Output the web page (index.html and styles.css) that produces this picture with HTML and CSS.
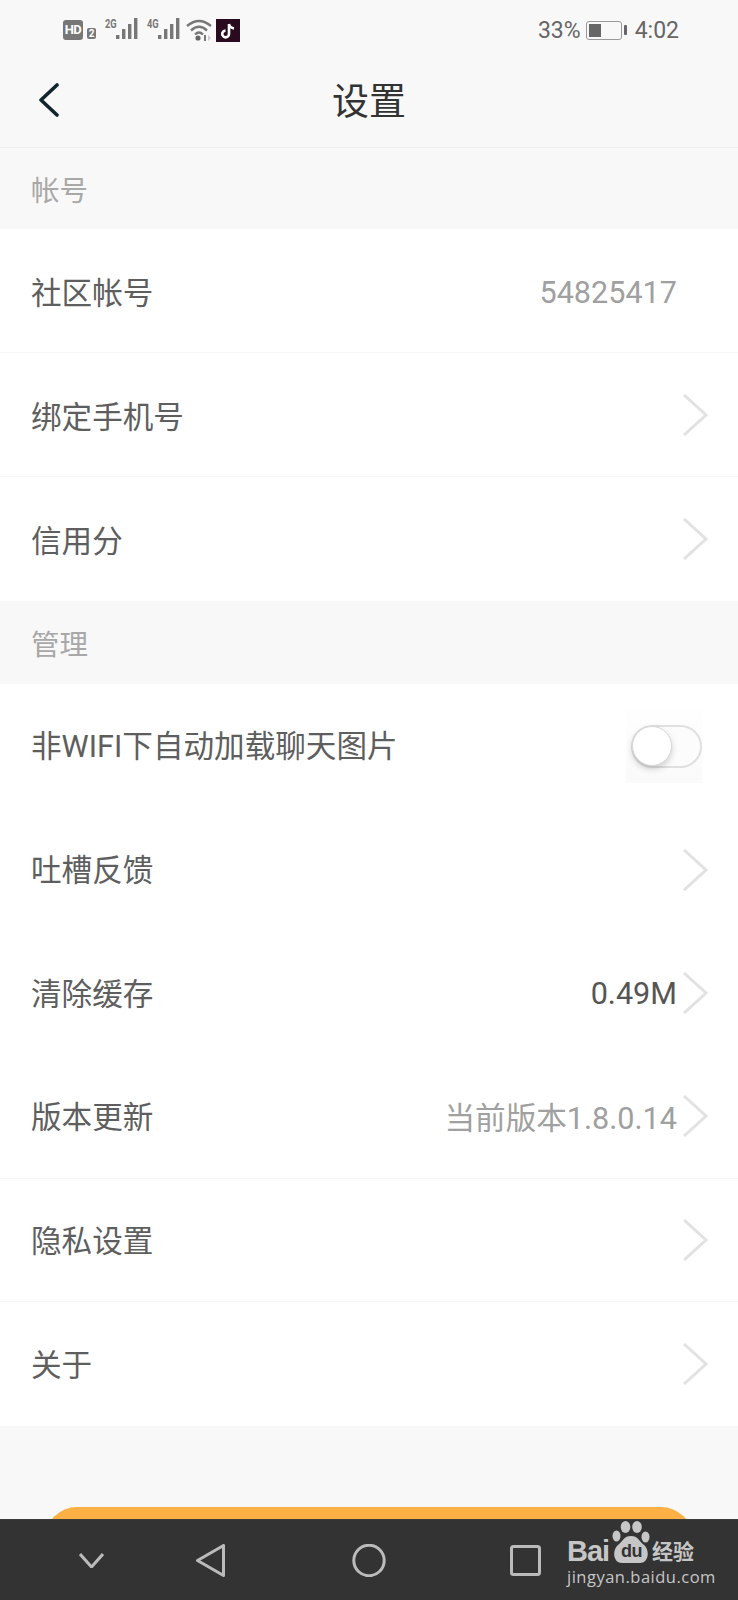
FILE: index.html
```html
<!DOCTYPE html>
<html lang="zh-CN">
<head>
  <meta charset="UTF-8" />
  <meta name="viewport" content="width=device-width, initial-scale=1.0" />
  <title>设置</title>
  <link rel="stylesheet" href="styles.css">
</head>
<body>
  <div class="content">
    <div class="status-bar">
      <div class="status-left">
        <span class="hd">HD</span>
        <span class="sim">2</span>
        <svg class="signal" width="35" height="28" viewBox="0 -2 35 28">
          <text class="net" transform="translate(1 10) scale(.85 1.2)">2G</text>
          <rect x="12" y="17" width="3.4" height="4"/><rect x="18" y="11" width="3.4" height="10"/>
          <rect x="24" y="6" width="3.4" height="15"/><rect x="30" y="0" width="3.4" height="21"/>
        </svg>
        <svg class="signal" width="35" height="28" viewBox="0 -2 35 28">
          <text class="net" transform="translate(1 10) scale(.85 1.2)">4G</text>
          <rect x="12" y="17" width="3.4" height="4"/><rect x="18" y="11" width="3.4" height="10"/>
          <rect x="24" y="6" width="3.4" height="15"/><rect x="30" y="0" width="3.4" height="21"/>
        </svg>
        <svg class="wifi" width="27" height="24" viewBox="0 0 27 24">
          <path d="M1 8 Q13 -2 25 8 M5 12.5 Q13 5 21 12.5 M9 16.5 Q13 12.5 17 16.5" fill="none" stroke="#777" stroke-width="2.4"/>
          <circle cx="12" cy="20" r="2.6" fill="#666"/>
          <rect x="18" y="17" width="2" height="6" fill="#777"/>
          <path d="M22 17 L25 20 L22 23Z" fill="#ccc"/>
        </svg>
        <svg class="tiktok" width="24" height="23" viewBox="0 0 24 23">
          <rect width="24" height="23" fill="#2a0a1e"/>
          <path d="M13 5 V15 A3.4 3.4 0 1 1 9.5 11.6 M13 5 Q14 9 18 9.4" fill="none" stroke="#fff" stroke-width="2.6"/>
        </svg>
      </div>
      <div class="status-right">
        <span>33%</span>
        <span class="battery"><span class="battery-level"></span></span>
        <span class="battery-nub"></span>
        <span class="clock">4:02</span>
      </div>
    </div>

    <div class="title-bar">
      <svg class="back" width="22" height="34" viewBox="0 0 22 34">
        <path d="M19 2 L3 17 L19 32" fill="none" stroke="#10252e" stroke-width="3.6" stroke-linecap="round" stroke-linejoin="round"/>
      </svg>
      <h1>设置</h1>
    </div>

    <div class="section-title">帐号</div>
    <div class="group">
      <div class="row row-tall line"><span>社区帐号</span><span class="value no-arrow">54825417</span></div>
      <div class="row row-tall line"><span>绑定手机号</span><svg class="arrow" viewBox="0 0 25 42"><path d="M1 1 L23 21 L1 41"/></svg></div>
      <div class="row row-tall"><span>信用分</span><svg class="arrow" viewBox="0 0 25 42"><path d="M1 1 L23 21 L1 41"/></svg></div>
    </div>

    <div class="section-title section-manage">管理</div>
    <div class="group">
      <div class="row">
        <span>非WIFI下自动加载聊天图片</span>
        <span class="switch-wrap"><span class="switch"><span class="knob"></span></span></span>
      </div>
      <div class="row"><span>吐槽反馈</span><svg class="arrow" viewBox="0 0 25 42"><path d="M1 1 L23 21 L1 41"/></svg></div>
      <div class="row"><span>清除缓存</span><span class="tail"><span class="value dark">0.49M</span><svg class="arrow" viewBox="0 0 25 42"><path d="M1 1 L23 21 L1 41"/></svg></span></div>
      <div class="row line"><span>版本更新</span><span class="tail"><span class="value">当前版本1.8.0.14</span><svg class="arrow" viewBox="0 0 25 42"><path d="M1 1 L23 21 L1 41"/></svg></span></div>
      <div class="row line"><span>隐私设置</span><svg class="arrow" viewBox="0 0 25 42"><path d="M1 1 L23 21 L1 41"/></svg></div>
      <div class="row"><span>关于</span><svg class="arrow" viewBox="0 0 25 42"><path d="M1 1 L23 21 L1 41"/></svg></div>
    </div>

    <div class="logout"></div>
  </div>

  <div class="nav-bar">
    <svg class="nav-down" width="25" height="15" viewBox="0 0 25 15"><path d="M1 1 L12.5 14 L24 1"/></svg>
    <svg class="nav-back" width="29" height="33" viewBox="0 0 29 33"><path d="M27.5 1.5 V31.5 L1.5 16.5Z"/></svg>
    <svg class="nav-home" width="34" height="33" viewBox="0 0 34 33"><circle cx="17" cy="16.5" r="15.2"/></svg>
    <svg class="nav-recent" width="31" height="31" viewBox="0 0 31 31"><rect x="1.5" y="1.5" width="28" height="28" rx="2"/></svg>
  </div>

  <div class="watermark">
    <div class="wm-top">
      <span class="wm-bai">Bai</span>
      <span class="wm-paw">
        <svg width="38" height="43" viewBox="0 0 38 43">
          <ellipse cx="4.5" cy="15" rx="4" ry="5.5"/><ellipse cx="13.5" cy="6" rx="4.8" ry="6"/>
          <ellipse cx="25" cy="6" rx="4.8" ry="6"/><ellipse cx="33.5" cy="16" rx="4" ry="5.5"/>
          <path d="M19 15 C26 15 27 20 32 24 C38 29 37 42 28 42 L10 42 C1 42 0 29 6 24 C11 20 12 15 19 15Z"/>
        </svg>
        <span class="wm-du">du</span>
      </span>
      <span class="wm-jy">经验</span>
    </div>
    <div class="wm-url">jingyan.baidu.com</div>
  </div>
</body>
</html>
```

FILE: styles.css
```css
* { box-sizing: border-box; }
html, body { margin: 0; padding: 0; }
body { width: 738px; height: 1600px; overflow: hidden; position: relative; display: flex; flex-direction: column; background: #f8f8f8; color: #555; font-family: Roboto, "Noto Sans CJK SC", sans-serif; }

.content { flex: 1; overflow: hidden; background: #f8f8f8; }

.status-bar { height: 60px; display: flex; justify-content: space-between; align-items: center; padding: 0 59px 0 63px; color: #666; font-size: 23px; }
.status-left, .status-right { display: flex; align-items: center; }
.hd { width: 20px; height: 20px; border-radius: 3px; background: #777; color: #fff; font-size: 13px; font-weight: 700; line-height: 20px; text-align: center; letter-spacing: -0.5px; }
.sim { width: 9px; height: 11px; margin: 7px 0 0 4px; border-radius: 2px; background: #777; color: #fff; font-size: 10px; font-weight: 700; line-height: 11px; text-align: center; }
.signal { margin-left: 8px; fill: #777; }
.signal + .signal { margin-left: 7px; }
.net { font-family: Roboto, sans-serif; font-size: 11px; font-weight: 700; fill: #777; }
.wifi { margin-left: 5px; }
.tiktok { margin-left: 3px; }
.battery { width: 36px; height: 19px; margin-left: 5px; padding: 2px; border: 1.5px solid #999; border-radius: 3px; display: block; }
.battery-level { width: 12px; height: 100%; background: #666; display: block; }
.battery-nub { width: 3px; height: 10px; margin-left: 2px; background: #666; border-radius: 1px; }
.clock { margin-left: 8px; }

.title-bar { height: 88px; padding-bottom: 9px; position: relative; display: flex; align-items: center; justify-content: center; border-bottom: 1px solid #eee; }
.title-bar h1 { margin: 0; font-size: 37px; font-weight: 400; color: #333; }
.back { position: absolute; left: 38px; top: 23px; }

.section-title { height: 81px; padding-left: 31px; display: flex; align-items: center; font-size: 28.5px; color: #a8a8a8; }
.section-manage { height: 83px; }

.group { background: #fff; }
.row { height: 123.7px; padding: 0 31px; display: flex; justify-content: space-between; align-items: center; font-size: 30.6px; color: #5e5e5e; }
.row > span:first-child { margin-bottom: 3px; }
.row-tall { height: 124px; }
.row-tall > span:first-child { margin-bottom: 0; }
.line { border-bottom: 1px solid #f5f5f5; }
.value { color: #a0a0a0; }
.value.dark { color: #555; }
.no-arrow { margin-right: 30px; margin-top: 3px; }
.tail { display: flex; align-items: center; }
.arrow { width: 25px; height: 42px; margin-right: -1px; margin-left: 6px; fill: none; stroke: #e2e2e2; stroke-width: 3; }

.switch-wrap { width: 76px; height: 74px; margin-right: 5px; padding: 16px 0 0 5px; background: linear-gradient(#fefefe, #fafafa); }
.switch { width: 71px; height: 43px; display: block; position: relative; border: 2px solid #e0e0e0; border-radius: 22px; background: #fcfcfc; }
.knob { width: 40px; height: 40px; position: absolute; left: -1px; top: -1px; border-radius: 50%; background: #fff; border: 1px solid #d8d8d8; box-shadow: 0 3px 6px rgba(0, 0, 0, 0.18); }

.logout { height: 90px; margin: 81px 45px 0; border-radius: 32px; background: #fdb046; }

.nav-bar { height: 81px; flex-shrink: 0; display: flex; align-items: center; padding-left: 79px; background: #333; border-top: 1px solid #3c3c3c; }
.nav-bar svg { fill: none; stroke: #bbb; stroke-width: 3; stroke-linejoin: round; }
.nav-back { margin-left: 92px; }
.nav-home { margin-left: 127px; }
.nav-recent { margin-left: 124px; }

.watermark { position: absolute; left: 567px; top: 1521px; color: #c6c6c6; }
.wm-top { display: flex; align-items: flex-end; height: 43px; }
.wm-bai { font-family: "Liberation Sans", sans-serif; font-size: 29px; font-weight: 700; line-height: 24px; margin-bottom: 1px; width: 45px; letter-spacing: -1px; }
.wm-paw { width: 38px; height: 43px; position: relative; }
.wm-paw svg { fill: #c6c6c6; display: block; }
.wm-du { position: absolute; left: 9px; top: 20px; color: #333; font-family: "Liberation Sans", sans-serif; font-size: 18px; font-weight: 700; line-height: 20px; letter-spacing: -0.5px; }
.wm-jy { font-family: "Noto Sans CJK SC", sans-serif; font-size: 21px; font-weight: 700; line-height: 22px; margin: 0 0 3px 2px; white-space: nowrap; }
.wm-url { font-family: "Open Sans", sans-serif; font-size: 16.5px; letter-spacing: 0.5px; line-height: 20px; margin-top: 3px; white-space: nowrap; }
```
